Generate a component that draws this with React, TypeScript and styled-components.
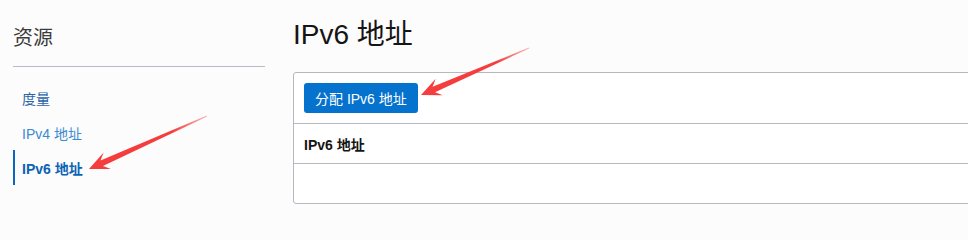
import React from 'react';
import styled, { createGlobalStyle } from 'styled-components';

type Pt = [number, number];

const GlobalStyle = createGlobalStyle`
  html, body {
    margin: 0;
    padding: 0;
    background: #fcfcfc;
    font-family: "Liberation Sans", Arial, "Noto Sans CJK SC", sans-serif;
  }
`;

const navItems = [
  { label: '度量', tone: 'visited' },
  { label: 'IPv4 地址', tone: 'link' },
  { label: 'IPv6 地址', tone: 'active' },
] as const;

// polygon for a tapered annotation arrow
const arrowPoints = (tail: Pt, tip: Pt) => {
  const dx = tip[0] - tail[0];
  const dy = tip[1] - tail[1];
  const len = Math.hypot(dx, dy);
  const ux = dx / len;
  const uy = dy / len;
  const nx = -uy;
  const ny = ux;
  const at = (d: number, w: number): string =>
    `${(tip[0] - ux * d + nx * w).toFixed(1)},${(tip[1] - uy * d + ny * w).toFixed(1)}`;
  return [
    at(len, 0.4),
    at(14, 3),
    at(20, 9),
    at(0, 0),
    at(20, -9),
    at(14, -3),
    at(len, -0.4),
  ].join(' ');
};

const arrows: { tail: Pt; tip: Pt }[] = [
  { tail: [207, 116], tip: [89, 169] },
  { tail: [529, 48], tip: [421, 95] },
];

const App = () => (
  <>
    <GlobalStyle />
    <Page>
      <Sidebar>
        <SideTitle>资源</SideTitle>
        <NavList>
          {navItems.map((item) => (
            <NavItem key={item.label} tone={item.tone}>
              {item.label}
            </NavItem>
          ))}
        </NavList>
      </Sidebar>
      <Main>
        <Heading>IPv6 地址</Heading>
        <Panel>
          <Toolbar>
            <PrimaryButton>分配 IPv6 地址</PrimaryButton>
          </Toolbar>
          <HeaderRow>IPv6 地址</HeaderRow>
          <EmptyRow />
        </Panel>
      </Main>
      <Annotations width="968" height="209" viewBox="0 0 968 209">
        <defs>
          {arrows.map((a, i) => (
            <linearGradient
              key={i}
              id={`fade${i}`}
              gradientUnits="userSpaceOnUse"
              x1={a.tail[0]}
              y1={a.tail[1]}
              x2={a.tip[0]}
              y2={a.tip[1]}
            >
              <stop offset="0" stopColor="#f53d3d" stopOpacity="0.35" />
              <stop offset="0.3" stopColor="#f53d3d" stopOpacity="1" />
              <stop offset="1" stopColor="#f53d3d" stopOpacity="1" />
            </linearGradient>
          ))}
        </defs>
        {arrows.map((a, i) => (
          <polygon key={i} points={arrowPoints(a.tail, a.tip)} fill={`url(#fade${i})`} />
        ))}
      </Annotations>
    </Page>
  </>
);

export default App;

const Page = styled.div`
  position: relative;
  display: flex;
  width: 968px;
  height: 209px;
  padding-left: 13px;
  box-sizing: border-box;
  overflow: hidden;
`;

const Sidebar = styled.aside`
  width: 252px;
  flex-shrink: 0;
  padding-top: 26px;
`;

const SideTitle = styled.div`
  font-size: 20px;
  line-height: 24px;
  color: #3c3c3c;
  padding-bottom: 16px;
  border-bottom: 1px solid #b8bdc5;
`;

const NavList = styled.nav`
  display: flex;
  flex-direction: column;
  margin-top: 13px;
`;

const toneColor = {
  visited: '#2a63a6',
  link: '#3b8ad2',
  active: '#0b63b5',
};

const NavItem = styled.a<{ tone: 'visited' | 'link' | 'active' }>`
  display: flex;
  align-items: center;
  height: 35px;
  padding-left: 7px;
  border-left: 2px solid ${(p) => (p.tone === 'active' ? '#0a66c2' : 'transparent')};
  font-size: 14px;
  font-weight: ${(p) => (p.tone === 'active' ? 700 : 400)};
  color: ${(p) => toneColor[p.tone]};
  cursor: pointer;
`;

const Main = styled.main`
  margin-left: 28px;
  flex-shrink: 0;
  width: 720px;
  padding-top: 19px;
`;

const Heading = styled.h1`
  margin: 0;
  font-size: 28px;
  line-height: 32px;
  font-weight: 400;
  color: #161513;
`;

const Panel = styled.section`
  margin-top: 21px;
  border: 1px solid #b5b9bf;
  border-radius: 3px;
  background: #ffffff;
`;

const Toolbar = styled.div`
  display: flex;
  padding: 10px 10px 10px;
  border-bottom: 1px solid #b5b9bf;
`;

const PrimaryButton = styled.button`
  height: 30px;
  padding: 0 11px;
  border: none;
  border-radius: 3px;
  background: #0572ce;
  color: #ffffff;
  font-family: inherit;
  font-size: 14px;
  cursor: pointer;
`;

const HeaderRow = styled.div`
  display: flex;
  align-items: center;
  height: 39px;
  padding-left: 10px;
  border-bottom: 1px solid #b5b9bf;
  font-size: 14px;
  font-weight: 700;
  color: #161513;
`;

const EmptyRow = styled.div`
  height: 39px;
`;

const Annotations = styled.svg`
  position: absolute;
  left: 0;
  top: 0;
  pointer-events: none;
`;
